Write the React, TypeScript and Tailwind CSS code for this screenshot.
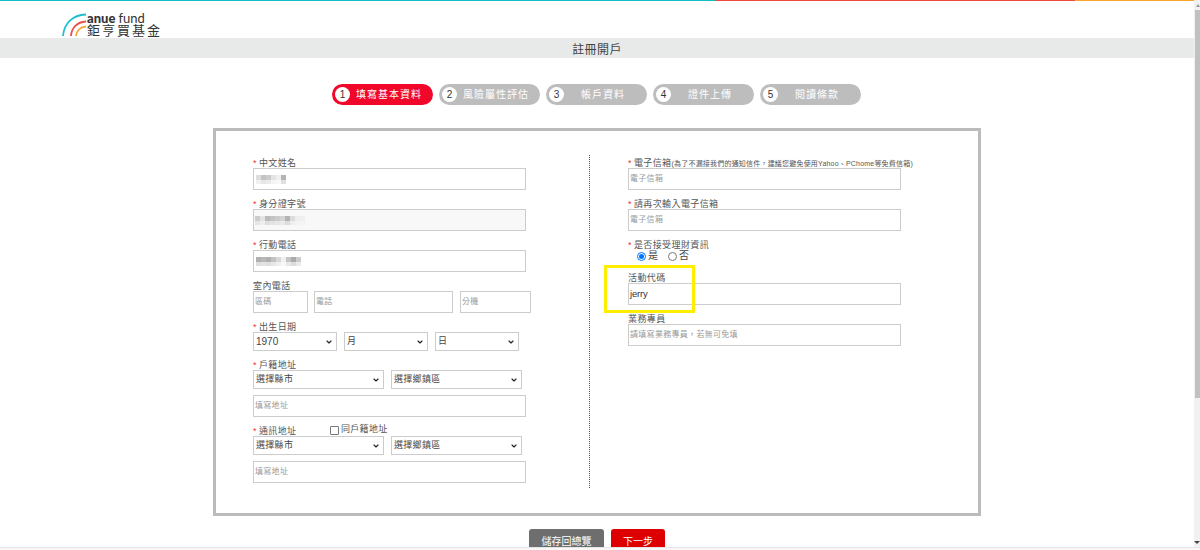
import { ChevronDown } from "lucide-react";

const cjk = "font-['Liberation_Sans','Noto_Sans_CJK_TC',sans-serif]";

const steps = [
  { n: 1, label: "填寫基本資料", active: true },
  { n: 2, label: "風險屬性評估" },
  { n: 3, label: "帳戶資料" },
  { n: 4, label: "證件上傳" },
  { n: 5, label: "閱讀條款" },
];

function Logo() {
  return (
    <div className="flex items-start">
      <svg width="25" height="24" viewBox="0 0 25 24" fill="none">
        <path d="M1 23 C2 11 10 2 24 1.500" stroke="#1fbfcf" strokeWidth="1.800" />
        <path d="M9 23 C9.500 15 15 9 24 8.500" stroke="#e8504a" strokeWidth="1.800" />
        <path d="M14 23 C14.500 18 18 14 24 13.500" stroke="#f6a434" strokeWidth="1.800" />
      </svg>
      <div className="flex flex-col text-[#333]">
        <div className="flex h-[10px] items-center text-[13px] leading-[10px] font-['Lato',sans-serif]">
          <span className="font-black">anue</span>
          <span className="ml-[3px]">fund</span>
        </div>
        <div className="text-[13px] leading-[13px] tracking-[2px] font-['Noto_Sans_CJK_TC',sans-serif]">鉅亨買基金</div>
      </div>
    </div>
  );
}

function Label({ text, req, className = "" }: { text: string; req?: boolean; className?: string }) {
  return (
    <div className={`h-[12px] pt-[1px] text-[9px] leading-[12px] text-[#555] tracking-[0.4px] ${className}`}>
      {req && <span className="text-[#e33] mr-[2px]">*</span>}
      {text}
    </div>
  );
}

function Field({ placeholder, value, className = "w-[273px]", children, bg = "bg-white" }: { placeholder?: string; value?: string; className?: string; children?: React.ReactNode; bg?: string }) {
  return (
    <div className={`h-[22px] border border-[#ccc] ${bg} flex items-center px-[1px] text-[8px] tracking-[0.3px] ${className}`}>
      {children}
      {value && <span className="text-[9.500px] text-[#333] tracking-[-0.2px]">{value}</span>}
      {placeholder && <span className="text-[#999]">{placeholder}</span>}
    </div>
  );
}

function Select({ text, className, dark }: { text: string; className: string; dark?: boolean }) {
  return (
    <div className={`h-[19px] border border-[#ccc] bg-white flex items-center justify-between pl-[2px] pr-[3px] text-[#444] ${dark ? "text-[10px]" : "text-[9px] tracking-[0.3px]"} ${className}`}>
      <span>{text}</span>
      <ChevronDown size={8} strokeWidth={3.500} className="text-[#222]" />
    </div>
  );
}

// pixelated blocks where the screenshot hides personal data
function Mosaic({ cells }: { cells: string[] }) {
  return (
    <div className="flex flex-col">
      <div className="flex">
        {cells.map((c, i) => (
          <div key={i} className="h-[5px] w-[5px]" style={{ background: c }} />
        ))}
      </div>
      <div className="flex opacity-40">
        {cells.map((c, i) => (
          <div key={i} className="h-[4px] w-[5px]" style={{ background: c }} />
        ))}
      </div>
    </div>
  );
}

export default function App() {
  return (
    <div className={`relative flex h-[550px] w-[1200px] overflow-hidden bg-white ${cjk}`}>
      <div className="flex w-[1194px] shrink-0 flex-col">
        {/* top stripe */}
        <div className="flex h-[1px] w-full shrink-0">
          <div className="w-[715px] bg-[#12bcc8]" />
          <div className="w-[360px] bg-[#f04a3e]" />
          <div className="flex-1 bg-[#f8a62c]" />
        </div>

        <div className="h-[37px] shrink-0 pl-[62px] pt-[12px]">
          <Logo />
        </div>

        <div className="flex h-[20px] shrink-0 items-center justify-center bg-[#e8e9e9] pt-[3px] text-[12px] tracking-[0.4px] text-[#444]">註冊開戶</div>

        {/* steps */}
        <div className="mt-[26px] flex h-[21px] shrink-0 justify-center gap-[6px] pr-[1px]">
          {steps.map((s) => (
            <div
              key={s.n}
              className={`flex h-[21px] w-[101px] items-center rounded-full pl-[3px] ${s.active ? "bg-[#f0072a]" : "bg-[#bdbdbd]"}`}
            >
              <div className="flex h-[15px] w-[15px] shrink-0 items-center justify-center rounded-full bg-white text-[10px] text-[#333]">{s.n}</div>
              <div className="flex-1 pr-[5px] text-center text-[10px] tracking-[1px] text-white">{s.label}</div>
            </div>
          ))}
        </div>

        {/* form panel */}
        <div className="ml-[213px] mt-[23px] flex h-[388px] w-[768px] shrink-0 border-[3px] border-[#bbb] pl-[37px] pt-[24px]">
          <div className="flex w-[336px] flex-col">
            <Label text="中文姓名" req className="mt-[1px]" />
            <Field className="w-[273px] pl-[2px]"><Mosaic cells={["#ddd", "#c4c4c4", "#ccc", "#e4e4e4", "#f0f0f0", "#b4b4b4"]} /></Field>
            <Label text="身分證字號" req className="mt-[7px]" />
            <Field bg="bg-[#f8f8f8]"><Mosaic cells={["#ccc", "#e4e4e4", "#bbb", "#c4c4c4", "#ccc", "#d4d4d4", "#b4b4b4", "#ddd", "#eee", "#f0f0f0"]} /></Field>
            <Label text="行動電話" req className="mt-[7px]" />
            <Field className="w-[273px] pl-[2px]"><Mosaic cells={["#b0b0b0", "#b8b8b8", "#b0b0b0", "#c4c4c4", "#d8d8d8", "#f0f0f0", "#c4c4c4", "#aaa", "#ccc"]} /></Field>
            <Label text="室內電話" className="mt-[7px]" />
            <div className="flex">
              <Field placeholder="區碼" className="w-[55px]" />
              <Field placeholder="電話" className="ml-[6px] w-[139px]" />
              <Field placeholder="分機" className="ml-[7px] w-[71px]" />
            </div>
            <Label text="出生日期" req className="mt-[7px]" />
            <div className="flex gap-[7px]">
              <Select text="1970" dark className="w-[84px]" />
              <Select text="月" className="w-[84px]" />
              <Select text="日" className="w-[84px]" />
            </div>
            <Label text="戶籍地址" req className="mt-[7px]" />
            <div className="flex gap-[7px]">
              <Select text="選擇縣市" className="w-[131px]" />
              <Select text="選擇鄉鎮區" className="w-[131px]" />
            </div>
            <Field placeholder="填寫地址" className="mt-[6px] w-[273px]" />
            <div className="mt-[7px] flex h-[12px] items-center">
              <Label text="通訊地址" req className="w-[77px]" />
              <div className="h-[9px] w-[9px] rounded-[1px] border border-[#777] bg-white" />
              <span className="ml-[2px] text-[9px] tracking-[0.3px] text-[#555]">同戶籍地址</span>
            </div>
            <div className="flex gap-[7px]">
              <Select text="選擇縣市" className="w-[131px]" />
              <Select text="選擇鄉鎮區" className="w-[131px]" />
            </div>
            <Field placeholder="填寫地址" className="mt-[6px] w-[273px]" />
          </div>

          {/* dotted divider */}
          <div className="h-[333px] w-0 border-l border-dotted border-[#555]" />

          <div className="ml-[38px] flex w-[273px] flex-col">
            <div className="mt-[1px] h-[12px] whitespace-nowrap pt-[1px] text-[9px] leading-[12px] tracking-[0.4px] text-[#555]">
              <span className="mr-[2px] text-[#e33]">*</span>電子信箱
              <span className="text-[7px] tracking-[0.2px]">(為了不漏接我們的通知信件，建議您避免使用Yahoo、PChome等免費信箱)</span>
            </div>
            <Field placeholder="電子信箱" />
            <Label text="請再次輸入電子信箱" req className="mt-[7px]" />
            <Field placeholder="電子信箱" />
            <Label text="是否接受理財資訊" req className="mt-[7px]" />
            <div className="flex h-[12px] items-center pl-[9px] text-[10px] leading-[12px] text-[#444]">
              <div className="flex h-[9px] w-[9px] items-center justify-center rounded-full border border-[#0075ff]">
                <div className="h-[5px] w-[5px] rounded-full bg-[#0075ff]" />
              </div>
              <span className="ml-[2px]">是</span>
              <div className="ml-[10px] h-[9px] w-[9px] rounded-full border border-[#777]" />
              <span className="ml-[2px]">否</span>
            </div>
            <Label text="活動代碼" className="mt-[9px]" />
            <Field value="jerry" />
            <Label text="業務專員" className="mt-[7px]" />
            <Field placeholder="請填寫業務專員，若無可免填" />
          </div>
        </div>

        {/* actions */}
        <div className="mt-[13px] flex shrink-0 justify-center gap-[7px]">
          <div className="flex h-[30px] w-[75px] items-center justify-center rounded-t-[3px] bg-[#6e6e6e] pb-[5px] text-[10px] text-white">儲存回總覽</div>
          <div className="flex h-[30px] w-[54px] items-center justify-center rounded-t-[3px] bg-[#de0000] pb-[5px] text-[10px] text-white">下一步</div>
        </div>
      </div>

      {/* scrollbar */}
      <div className="flex w-[6px] flex-col items-end bg-[#f1f1f1]">
        <div className="flex h-[10px] w-[5px] items-center justify-center">
          <div className="h-0 w-0 border-x-[2px] border-b-[3px] border-x-transparent border-b-[#999]" />
        </div>
        <div className="h-[388px] w-[5px] bg-[#c1c1c1]" />
        <div className="flex-1" />
        <div className="mb-[6px] h-0 w-0 border-x-[3px] border-t-[3px] border-x-transparent border-t-[#444]" />
      </div>

      {/* window edge cuts the page off at the bottom */}
      <div className="absolute bottom-0 left-0 h-[3px] w-full border-t border-[#e4e4e4] bg-[#f8f8f8]" />

      {/* yellow highlight over the campaign code field */}
      <div className="absolute left-[604px] top-[265px] h-[48px] w-[91px] border-[3px] border-[#ffee00]" />
    </div>
  );
}
